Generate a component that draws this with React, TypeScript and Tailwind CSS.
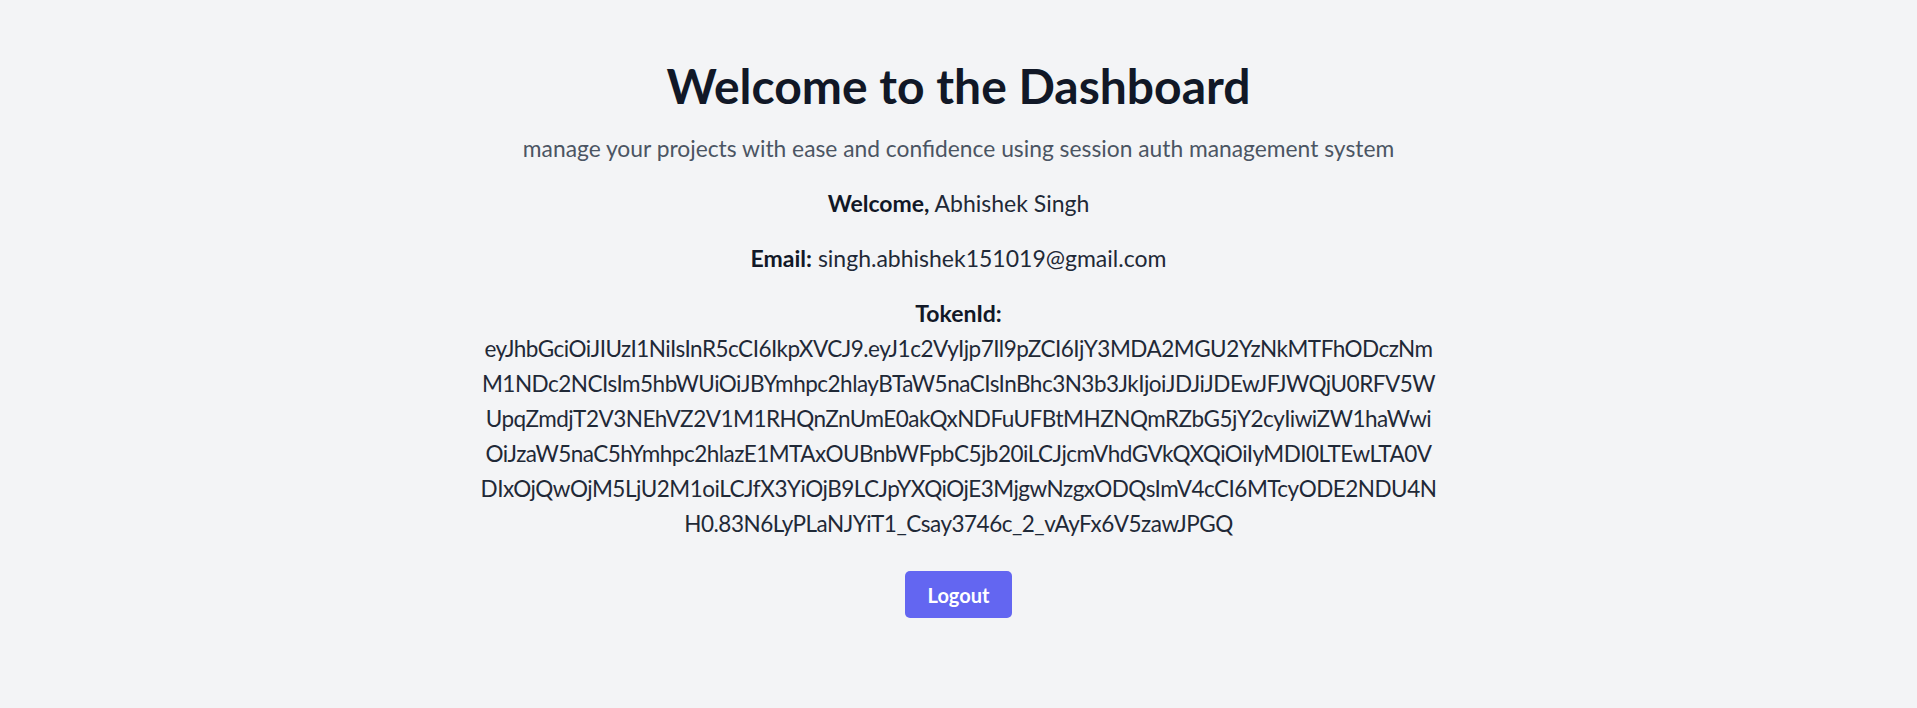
import React from 'react'

const user = {
  name: 'Abhishek Singh',
  email: 'singh.abhishek151019@gmail.com',
}

// token as it wraps on screen
const tokenLines = [
  'eyJhbGciOiJIUzI1NiIsInR5cCI6IkpXVCJ9.eyJ1c2VyIjp7Il9pZCI6IjY3MDA2MGU2YzNkMTFhODczNm',
  'M1NDc2NCIsIm5hbWUiOiJBYmhpc2hlayBTaW5naCIsInBhc3N3b3JkIjoiJDJiJDEwJFJWQjU0RFV5W',
  'UpqZmdjT2V3NEhVZ2V1M1RHQnZnUmE0akQxNDFuUFBtMHZNQmRZbG5jY2cyIiwiZW1haWwi',
  'OiJzaW5naC5hYmhpc2hlazE1MTAxOUBnbWFpbC5jb20iLCJjcmVhdGVkQXQiOiIyMDI0LTEwLTA0V',
  'DIxOjQwOjM5LjU2M1oiLCJfX3YiOjB9LCJpYXQiOjE3MjgwNzgxODQsImV4cCI6MTcyODE2NDU4N',
  'H0.83N6LyPLaNJYiT1_Csay3746c_2_vAyFx6V5zawJPGQ',
]

export default function App() {
  return (
    <div className="min-h-screen bg-[#f3f4f6] flex flex-col items-center text-center pt-[62px] font-['Lato',sans-serif]">
      <h1 className="text-[48px] leading-none font-bold text-[#111827] mb-[21px]">Welcome to the Dashboard</h1>
      <p className="text-[22.8px] leading-[35px] text-[#4b5563] mb-5">
        manage your projects with ease and confidence using session auth management system
      </p>

      <div className="text-[23px] leading-[35px] text-[#1f2937]">
        <p className="mb-5">
          <strong className="font-bold text-[#111827]">Welcome,</strong> {user.name}
        </p>
        <p className="mb-5">
          <strong className="font-bold text-[#111827]">Email:</strong> {user.email}
        </p>
        <div>
          <strong className="block font-bold text-[#111827]">TokenId:</strong>
          <div className="text-[22.5px] tracking-[-0.5px]">
            {tokenLines.map(line => (
              <span key={line} className="block">{line}</span>
            ))}
          </div>
        </div>
      </div>

      <button className="mt-[30px] h-[47px] px-[23px] rounded-[5px] bg-[#6366f1] text-white text-[20px] font-bold flex items-center justify-center">
        Logout
      </button>
    </div>
  )
}
